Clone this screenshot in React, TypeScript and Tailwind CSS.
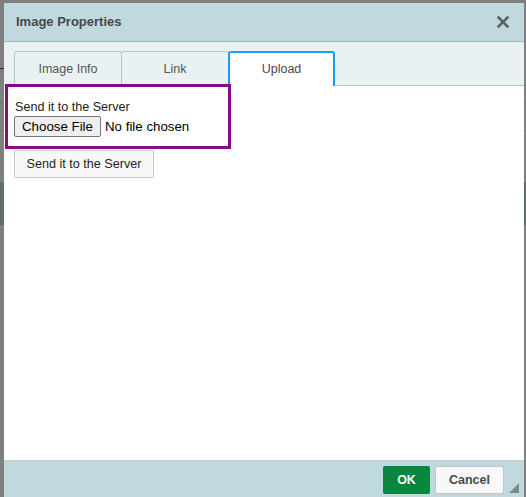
import React from "react";

const font = { fontFamily: '"Liberation Sans", Arial, sans-serif' };

function CloseIcon() {
  return (
    <svg width="12" height="12" viewBox="0 0 12 12" aria-hidden="true">
      <path d="M1.5 1.5 L10.5 10.5 M10.5 1.5 L1.5 10.5" stroke="#5c6264" strokeWidth="2.6" strokeLinecap="square" />
    </svg>
  );
}

function Tab({ label, active }: { label: string; active?: boolean }) {
  if (active) {
    return (
      <div className="relative z-[5] -mb-px flex h-[35px] w-[107px] items-center justify-center rounded-t-[3px] border-2 border-b-0 border-[#139ff7] bg-white pb-px text-[12.5px] text-[#4a4a4a]">
        {label}
      </div>
    );
  }
  return (
    <div className="-mr-px flex h-[34px] w-[108px] items-center justify-center rounded-t-[3px] border border-b-0 border-[#b8c4c7] bg-[#eaf1f3] pt-px text-[12.5px] text-[#555]">
      {label}
    </div>
  );
}

export default function App() {
  return (
    <div className="relative h-[497px] w-[526px] overflow-hidden bg-[#7f7f7f]" style={font}>
      {/* page behind the overlay */}
      <div className="flex flex-col">
        <div className="h-[68px]" />
        <div className="h-px w-[4px] bg-[#2e2e2e]" />
        <div className="h-[27px]" />
        <div className="h-px bg-[#8c8c8c]" />
        <div className="h-[36px]" />
        <div className="h-px bg-[#8c8c8c]" />
        <div className="h-[48px]" />
        <div className="h-[43px] bg-[#5e6c6c]" />
      </div>

      {/* dialog */}
      <div className="absolute left-[4px] top-[3px] flex h-[500px] w-[520px] flex-col bg-white">
        <div className="flex h-[39px] items-center justify-between border-b border-[#a3b8bc] bg-[#c0d9de] pl-[12px] pr-[15px]">
          <span className="text-[13px] font-bold text-[#484848]">Image Properties</span>
          <CloseIcon />
        </div>

        <div className="flex h-[44px] items-end border-b border-[#b6c3c6] bg-[#eaf1f3] pl-[10px]">
          <Tab label="Image Info" />
          <Tab label="Link" />
          <Tab label="Upload" active />
        </div>

        <div className="flex h-[374px] flex-col">
          <div className="relative z-10 -mt-[2px] ml-px flex h-[65px] w-[226px] flex-col border-[3px] border-[#8b0a8b] pl-[7px] pt-[13px]">
            <span className="text-[12.6px] leading-[15px] text-[#222]">Send it to the Server</span>
            <div className="mt-px flex items-center">
              <div className="ml-[-1px] flex h-[21px] w-[87px] items-center justify-center rounded-[2px] border border-[#767676] bg-[#efefef] text-[13.3px] text-black">
                Choose File
              </div>
              <span className="ml-[4px] text-[13.3px] text-black">No file chosen</span>
            </div>
          </div>
          <div className="ml-[10px] mt-px flex h-[28px] w-[140px] items-center justify-center rounded-[2px] border border-[#c7c7c7] bg-[#f8f8f8] text-[12.6px] text-[#222]">
            Send it to the Server
          </div>
        </div>

        <div className="relative flex flex-1 items-start justify-end gap-[5px] border-t border-[#c9c9c9] bg-[#c0d9de] pr-[20px] pt-[5px]">
          <div className="flex h-[28px] w-[47px] items-center justify-center rounded-[2px] bg-[#09863e] text-[12.5px] font-bold text-white">
            OK
          </div>
          <div className="flex h-[28px] w-[69px] items-center justify-center rounded-[2px] border border-[#c4c4c4] bg-[#f8f8f8] text-[12.5px] font-bold text-[#484848]">
            Cancel
          </div>
          <svg className="absolute right-[5px] top-[22px]" width="10" height="10" viewBox="0 0 10 10" aria-hidden="true">
            <path d="M10 0 L10 10 L0 10 Z" fill="#7d8a8d" />
          </svg>
        </div>
      </div>
    </div>
  );
}
